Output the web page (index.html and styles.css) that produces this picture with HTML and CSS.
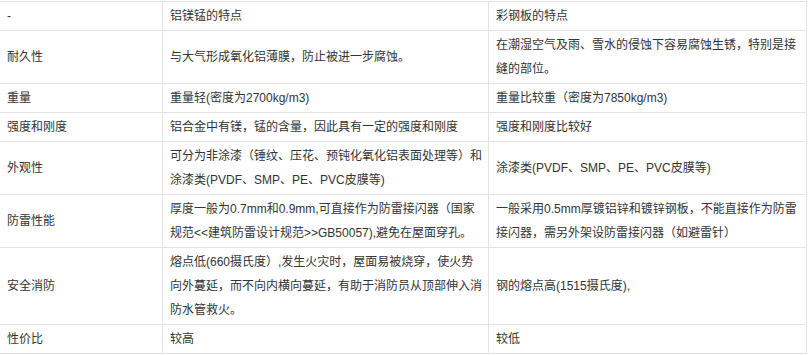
FILE: index.html
```html
<!DOCTYPE html>
<html lang="zh-CN">
<head>
<meta charset="utf-8">
<title>铝镁锰与彩钢板对比</title>
<link rel="stylesheet" href="styles.css">
</head>
<body>
<table class="compare">
  <colgroup>
    <col class="c1">
    <col class="c2">
    <col class="c3">
  </colgroup>
  <tbody>
    <tr><td>-</td><td>铝镁锰的特点</td><td>彩钢板的特点</td></tr>
    <tr><td>耐久性</td><td>与大气形成氧化铝薄膜，防止被进一步腐蚀。</td><td>在潮湿空气及雨、雪水的侵蚀下容易腐蚀生锈，特别是接缝的部位。</td></tr>
    <tr><td>重量</td><td>重量轻(密度为2700kg/m3)</td><td>重量比较重（密度为7850kg/m3)</td></tr>
    <tr><td>强度和刚度</td><td>铝合金中有镁，锰的含量，因此具有一定的强度和刚度</td><td>强度和刚度比较好</td></tr>
    <tr><td>外观性</td><td>可分为非涂漆（锤纹、压花、预钝化氧化铝表面处理等）和涂漆类(PVDF、SMP、PE、PVC皮膜等)</td><td>涂漆类(PVDF、SMP、PE、PVC皮膜等)</td></tr>
    <tr><td>防雷性能</td><td>厚度一般为0.7mm和0.9mm,可直接作为防雷接闪器（国家规范&lt;&lt;建筑防雷设计规范&gt;&gt;GB50057),避免在屋面穿孔。</td><td>一般采用0.5mm厚镀铝锌和镀锌钢板，不能直接作为防雷接闪器，需另外架设防雷接闪器（如避雷针）</td></tr>
    <tr><td>安全消防</td><td>熔点低(660摄氏度）,发生火灾时，屋面易被烧穿，使火势向外蔓延，而不向内横向蔓延，有助于消防员从顶部伸入消防水管救火。</td><td>钢的熔点高(1515摄氏度),</td></tr>
    <tr><td>性价比</td><td>较高</td><td>较低</td></tr>
  </tbody>
</table>
</body>
</html>
```
FILE: styles.css
```css
html, body {
  margin: 0;
  padding: 0;
  background: #fff;
}
body {
  padding-top: 1px;
}
.compare {
  border-collapse: collapse;
  table-layout: fixed;
  width: 807px;
  margin-left: -1px;
  font-family: "Liberation Sans", "Noto Sans CJK SC", sans-serif;
  font-size: 12px;
  line-height: 24px;
  color: #333;
}
.compare .c1 { width: 163px; }
.compare .c2 { width: 326px; }
.compare .c3 { width: 318px; }
.compare td {
  border: 1px solid #e3e3e3;
  padding: 2px 4px 2px 7px;
  vertical-align: middle;
  word-break: break-all;
}
```
